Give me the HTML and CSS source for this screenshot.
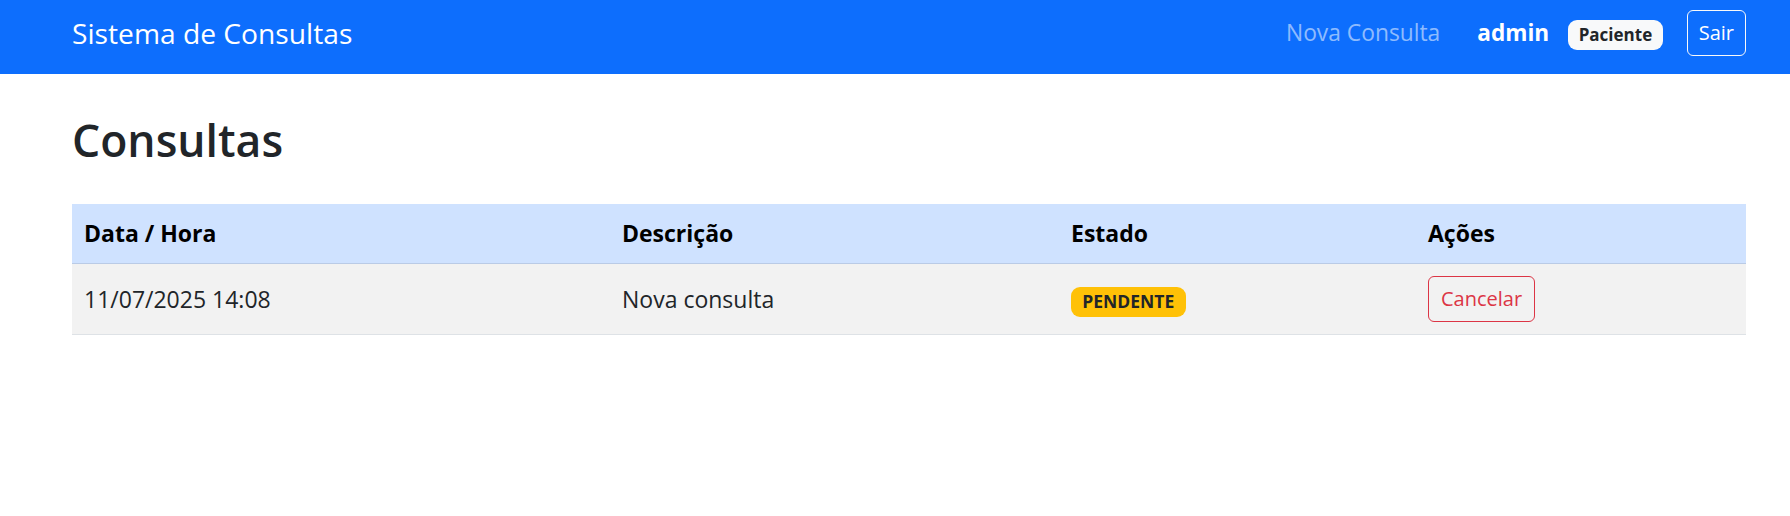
FILE: index.html
```html
<!DOCTYPE html>
<html lang="pt">
<head>
<meta charset="utf-8">
<title>Sistema de Consultas</title>
<link rel="stylesheet" href="styles.css">
</head>
<body>
<nav class="navbar">
  <div class="container nav-inner">
    <a class="brand" href="#">Sistema de Consultas</a>
    <div class="nav-right">
      <a class="nav-link" href="#">Nova Consulta</a>
      <span class="user"><strong class="username">admin</strong><span class="badge badge-light">Paciente</span></span>
      <button class="btn btn-outline-light">Sair</button>
    </div>
  </div>
</nav>
<main class="container">
  <h2 class="title">Consultas</h2>
  <table class="table">
    <thead>
      <tr>
        <th class="col-date">Data / Hora</th>
        <th class="col-desc">Descrição</th>
        <th class="col-state">Estado</th>
        <th class="col-actions">Ações</th>
      </tr>
    </thead>
    <tbody>
      <tr>
        <td>11/07/2025 14:08</td>
        <td>Nova consulta</td>
        <td><span class="badge badge-warning">PENDENTE</span></td>
        <td><button class="btn btn-outline-danger">Cancelar</button></td>
      </tr>
    </tbody>
  </table>
</main>
</body>
</html>
```
FILE: styles.css
```css
* { box-sizing: border-box; }

body {
  margin: 0;
  font-family: "Open Sans", "Noto Sans", sans-serif;
  font-size: 23px;
  line-height: 1.5;
  color: #212529;
  background: #fff;
}

.container {
  width: 1710px;
  margin-left: 54px;
  padding: 0 18px;
}

.navbar {
  background: #0d6efd;
  height: 74px;
}

.nav-inner {
  height: 66px;
  display: flex;
  align-items: center;
  justify-content: space-between;
}

.brand {
  color: #fff;
  text-decoration: none;
  font-size: 28.2px;
  line-height: 45px;
}

.nav-right {
  display: flex;
  align-items: center;
}

.nav-link {
  color: rgba(255, 255, 255, 0.55);
  text-decoration: none;
  font-size: 22.8px;
  line-height: 36px;
}

.user {
  display: flex;
  align-items: baseline;
  margin-left: 37px;
  line-height: 36px;
}

.username {
  color: #fff;
  font-weight: 700;
  font-size: 22.6px;
}

.badge {
  display: inline-block;
  font-size: 17.5px;
  font-weight: 700;
  line-height: 1;
  padding: 6.3px 11.3px;
  border-radius: 9px;
  color: #212529;
}

.badge-light {
  background: #f8f9fa;
  margin-left: 19px;
  font-size: 17px;
  padding: 6.5px 10.5px;
}

.badge-warning {
  background: #ffc107;
}

.btn {
  font-family: inherit;
  font-size: 20px;
  line-height: 31.5px;
  padding: 6px 12px;
  border-radius: 6px;
  background: transparent;
  cursor: pointer;
}

.btn-outline-light {
  color: #fff;
  border: 1px solid #f8f9fa;
  margin-left: 24px;
  padding: 6px 11px;
}

.btn-outline-danger {
  color: #dc3545;
  border: 1px solid #dc3545;
}

.title {
  margin: 39px 0 38px;
  font-size: 44.5px;
  font-weight: 600;
  line-height: 1.2;
  color: #212529;
}

.table {
  width: 1674px;
  border-collapse: collapse;
}

.table th,
.table td {
  padding: 12px;
  text-align: left;
  vertical-align: middle;
}

.table th {
  background: #cfe2ff;
  color: #000;
  font-weight: 700;
  line-height: 35px;
  border-bottom: 1px solid #bacbe6;
}

.table td {
  background: #f2f2f2;
  border-bottom: 1px solid #dee2e6;
  line-height: 36px;
}

.col-date { width: 538px; }
.col-desc { width: 449px; }
.col-state { width: 357px; }
.col-actions { width: 330px; }
```
